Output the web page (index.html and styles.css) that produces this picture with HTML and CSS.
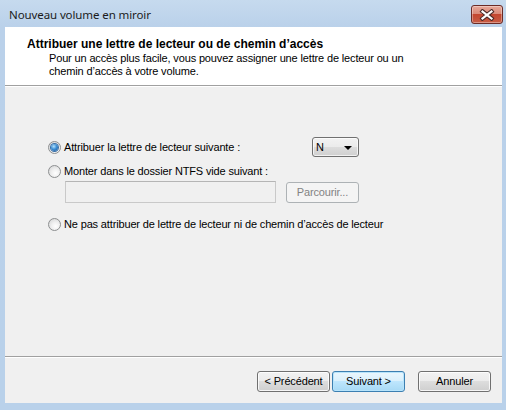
FILE: index.html
```html
<!DOCTYPE html>
<html lang="fr">
<head>
<meta charset="utf-8">
<title>Nouveau volume en miroir</title>
<link rel="stylesheet" href="styles.css">
</head>
<body>
<div class="window">
  <div class="titlebar">
    <span class="title">Nouveau volume en miroir</span>
    <button class="close" aria-label="Fermer">
      <svg width="16" height="12" viewBox="0 0 16 12">
        <path d="M3.5 2.5 L12.5 9.5 M12.5 2.5 L3.5 9.5" stroke="#4a2a28" stroke-width="4.2" stroke-linecap="square" fill="none"/>
        <path d="M3.5 2.5 L12.5 9.5 M12.5 2.5 L3.5 9.5" stroke="#ffffff" stroke-width="2.2" stroke-linecap="square" fill="none"/>
      </svg>
    </button>
  </div>
  <div class="client">
    <div class="header">
      <div class="heading">Attribuer une lettre de lecteur ou de chemin d’accès</div>
      <div class="subtitle">Pour un accès plus facile, vous pouvez assigner une lettre de lecteur ou un<br>chemin d’accès à votre volume.</div>
    </div>
    <div class="etched"></div>
    <div class="body">
      <div class="row row-first">
        <label class="option"><span class="radio checked"></span><span>Attribuer la lettre de lecteur suivante :</span></label>
        <div class="combo"><span>N</span><span class="arrow"></span></div>
      </div>
      <div class="row row-second">
        <label class="option"><span class="radio"></span><span>Monter dans le dossier NTFS vide suivant :</span></label>
      </div>
      <div class="pathrow">
        <div class="textbox"></div>
        <div class="btn disabled browse">Parcourir...</div>
      </div>
      <div class="row row-third">
        <label class="option"><span class="radio"></span><span>Ne pas attribuer de lettre de lecteur ni de chemin d’accès de lecteur</span></label>
      </div>
    </div>
    <div class="etched"></div>
    <div class="footer">
      <div class="btn">&lt; Précédent</div>
      <div class="btn default">Suivant &gt;</div>
      <div class="btn cancel">Annuler</div>
    </div>
  </div>
</div>
</body>
</html>
```
FILE: styles.css
```css
* { box-sizing: border-box; }
html, body { margin: 0; padding: 0; }
body {
  width: 506px;
  height: 410px;
  overflow: hidden;
  background: #b9d1ea;
  font-family: "Liberation Sans", Arial, sans-serif;
  font-size: 11px;
  letter-spacing: -0.15px;
  color: #000;
}
.window {
  width: 506px;
  height: 410px;
  display: flex;
  flex-direction: column;
  background: linear-gradient(#c6daee 0, #bad1ea 27px, #b9d1ea 100%);
}
.titlebar {
  height: 27px;
  display: flex;
  align-items: flex-start;
  justify-content: space-between;
  padding: 0 3px 0 9px;
}
.title {
  font-family: "Noto Sans", "Open Sans", sans-serif;
  font-size: 11.5px;
  line-height: 16px;
  margin-top: 7px;
  color: #1b1b1b;
  letter-spacing: -0.1px;
}
.close {
  margin-top: 5px;
  width: 32px;
  height: 19px;
  padding: 0;
  border: 1px solid #6b2b26;
  border-radius: 3px;
  background: linear-gradient(#e8a899 0, #d98a79 45%, #c4462f 50%, #c75d46 100%);
  box-shadow: inset 0 0 0 1px rgba(255,255,255,0.35);
  display: flex;
  align-items: center;
  justify-content: center;
}
.close svg { display: block; }
.client {
  flex: 1;
  margin: 0 4px 7px 5px;
  background: #f0f0f0;
  display: flex;
  flex-direction: column;
}
.header {
  height: 58px;
  background: #ffffff;
  padding: 10px 0 0 22px;
  line-height: 13px;
}
.heading { font-weight: bold; font-size: 12px; line-height: 14px; letter-spacing: 0; }
.subtitle { padding-left: 22px; margin-top: 1px; }
.etched {
  height: 2px;
  border-top: 1px solid #a0a0a0;
  border-bottom: 1px solid #ffffff;
}
.body {
  flex: 1;
  padding: 50px 0 0 43px;
  display: flex;
  flex-direction: column;
}
.row {
  height: 20px;
  display: flex;
  align-items: center;
}
.row-first { display: grid; grid-template-columns: 264px 47px; align-items: center; }
.row-second { margin-top: 4px; }
.row-third { margin-top: 11px; }
.option {
  display: flex;
  align-items: center;
  gap: 3px;
}
.radio {
  width: 13px;
  height: 13px;
  border-radius: 50%;
  border: 1px solid #8d8f90;
  background: radial-gradient(circle at 60% 65%, #ffffff 0, #f0f0f0 40%, #cfd0d1 100%);
  display: flex;
  align-items: center;
  justify-content: center;
  flex: none;
}
.radio.checked::after {
  content: "";
  width: 7px;
  height: 7px;
  border-radius: 50%;
  background: radial-gradient(circle at 40% 35%, #b6e2fb 0, #3c8fd6 45%, #1a4f8c 100%);
  box-shadow: 0 0 0 1px #3a6fa6;
}
.combo {
  width: 47px;
  height: 20px;
  border: 1px solid #707070;
  border-radius: 3px;
  background: linear-gradient(#f2f2f2 0, #ebebeb 50%, #dddddd 50%, #cfcfcf 100%);
  box-shadow: inset 0 0 0 1px rgba(255,255,255,0.7);
  display: flex;
  align-items: center;
  justify-content: space-between;
  padding: 0 6px 0 3px;
}
.arrow {
  width: 0;
  height: 0;
  border-left: 4px solid transparent;
  border-right: 4px solid transparent;
  border-top: 4px solid #000;
  margin-top: 1px;
}
.pathrow {
  display: flex;
  align-items: center;
  margin-top: 0;
  padding-left: 17px;
  height: 22px;
}
.textbox {
  width: 211px;
  height: 22px;
  border: 1px solid #c9c9c9;
  border-top-color: #b5b5b5;
  background: #f0f0f0;
}
.btn {
  width: 73px;
  height: 21px;
  border: 1px solid #707070;
  border-radius: 3px;
  background: linear-gradient(#f2f2f2 0, #ebebeb 50%, #dddddd 50%, #cfcfcf 100%);
  box-shadow: inset 0 0 0 1px rgba(255,255,255,0.8);
  display: flex;
  align-items: center;
  justify-content: center;
  line-height: 13px;
}
.btn.disabled {
  border-color: #adb2b5;
  background: #f4f4f4;
  box-shadow: none;
  color: #838383;
}
.browse { margin-left: 10px; height: 21px; }
.btn.default {
  border-color: #3c7fb1;
  background: linear-gradient(#eaf6fd 0, #d9f0fc 50%, #bee6fd 50%, #a7d9f5 100%);
  box-shadow: inset 0 0 0 1px #b7e4fb;
}
.footer {
  height: 45px;
  display: flex;
  justify-content: flex-end;
  padding: 13px 11px 0 0;
  gap: 2px;
}
.footer .cancel { margin-left: 11px; }
```
